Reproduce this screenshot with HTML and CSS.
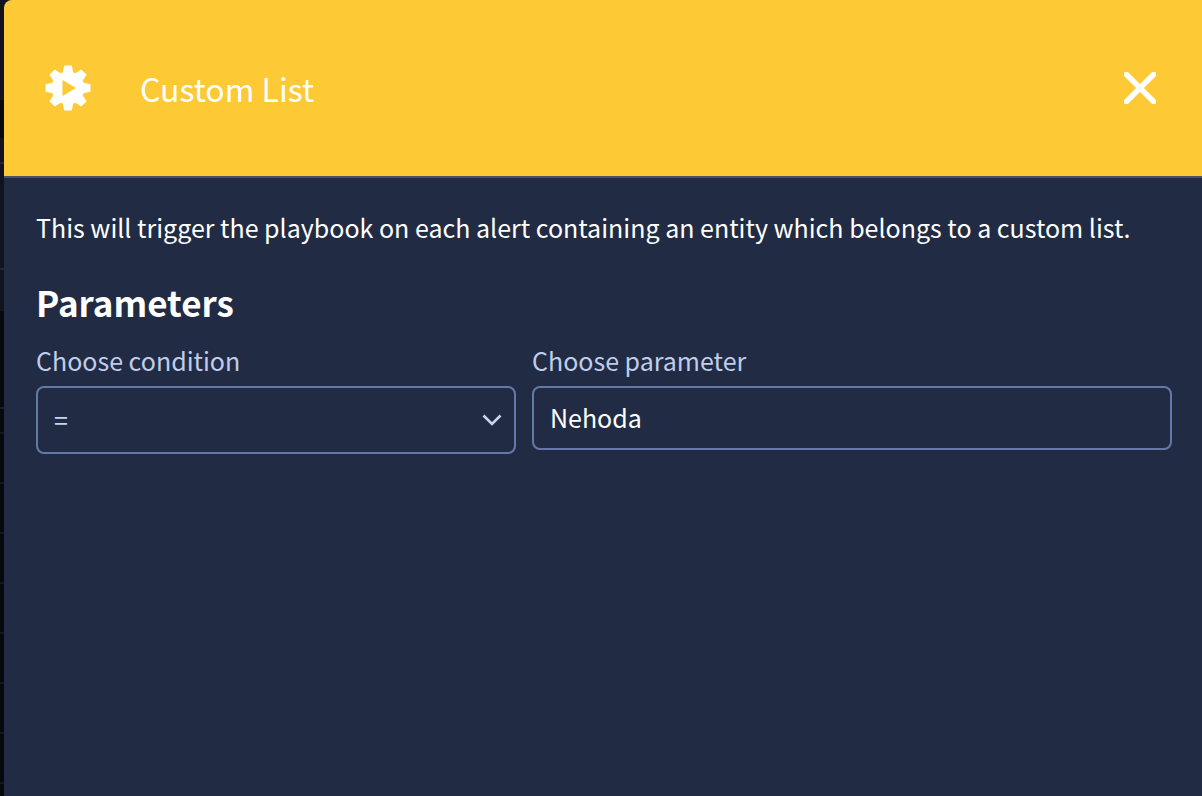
FILE: index.html
```html
<!DOCTYPE html>
<html lang="en">
<head>
    <meta charset="UTF-8">
    <meta name="viewport" content="width=device-width, initial-scale=1.0">
    <title>Custom List</title>
    <link rel="stylesheet" href="styles.css">
</head>
<body>

<div class="panel">
    <header class="panel-header">
        <svg class="gear" viewBox="0 0 46 46" aria-hidden="true">
            <g fill="#fff">
                <circle cx="23" cy="23" r="16.500"/>
                <path id="tooth" d="M17.500 9 L19.200 0.500 H26.800 L28.500 9 Z"/>
                <use href="#tooth" transform="rotate(45 23 23)"/>
                <use href="#tooth" transform="rotate(90 23 23)"/>
                <use href="#tooth" transform="rotate(135 23 23)"/>
                <use href="#tooth" transform="rotate(180 23 23)"/>
                <use href="#tooth" transform="rotate(225 23 23)"/>
                <use href="#tooth" transform="rotate(270 23 23)"/>
                <use href="#tooth" transform="rotate(315 23 23)"/>
            </g>
            <path d="M17.500 15 L31 23 L17.500 31 Z" fill="#fdc935"/>
        </svg>
        <h1 class="panel-title">Custom List</h1>
        <button type="button" class="close" aria-label="Close">
            <svg viewBox="0 0 32 32" aria-hidden="true">
                <path d="M2.500 2.500 L29.500 29.500 M29.500 2.500 L2.500 29.500" stroke="#fff" stroke-width="5.500" stroke-linecap="round"/>
            </svg>
        </button>
    </header>

    <main class="panel-body">
        <p class="description">This will trigger the playbook on each alert containing an entity which belongs to a custom list.</p>

        <h2 class="section-title">Parameters</h2>

        <form class="form-row">
            <div class="form-group condition">
                <label for="condition">Choose condition</label>
                <div class="select-wrap">
                    <select id="condition">
                        <option>=</option>
                    </select>
                    <svg class="chevron" viewBox="0 0 20 12" aria-hidden="true">
                        <path d="M1.500 1.500 L10 10 L18.500 1.500" fill="none" stroke="#c8d5f0" stroke-width="2.600"/>
                    </svg>
                </div>
            </div>
            <div class="form-group parameter">
                <label for="parameter">Choose parameter</label>
                <input type="text" id="parameter" value="Nehoda">
            </div>
        </form>
    </main>
</div>

</body>
</html>
```
FILE: styles.css
```css
* {
    box-sizing: border-box;
}
body {
    margin: 0;
    padding-left: 4px;
    /* dimmed page behind the panel */
    background:
        repeating-linear-gradient(transparent 0 32px, #14151e 32px 34px, transparent 34px 50px) 0 400px / 4px 100% no-repeat,
        linear-gradient(#11131e 0 100px, #08080e 100px 138px, #11131e 138px 162px, #252733 162px 164px, #11131e 164px 268px, #252733 268px 270px, #11131e 270px 311px, #08080f 311px 407px, #1b1c25 407px 409px, #08080f 409px);
    font-family: "Noto Sans CJK SC", "Noto Sans", sans-serif;
    font-size: 25px;
    line-height: 36px;
    color: #fff;
}
.panel {
    min-height: 100vh;
    background-color: #212c44;
    border-top-left-radius: 8px;
    overflow: hidden;
}
.panel-header {
    display: flex;
    align-items: center;
    padding: 62px 46px 62px 41px;
    background-color: #fdc935;
    border-bottom: 2px solid #4b5166;
}
.gear {
    width: 46px;
    height: 46px;
}
.panel-title {
    flex: 1;
    margin: 0 0 0 49px;
    font-size: 32px;
    font-weight: 400;
    line-height: 52px;
}
.close {
    width: 32px;
    height: 32px;
    padding: 0;
    border: none;
    background: none;
    cursor: pointer;
}
.close svg {
    display: block;
}
.panel-body {
    padding: 31px 30px 31px 32px;
}
.description {
    margin: 0;
}
.section-title {
    margin: 31px 0 14px;
    font-size: 35px;
    font-weight: 700;
    line-height: 52px;
}
.form-row {
    display: flex;
    align-items: flex-start;
    gap: 16px;
}
.form-group {
    display: flex;
    flex-direction: column;
    gap: 8px;
}
.condition {
    flex: 3;
}
.parameter {
    flex: 4;
}
label {
    color: #c0cdea;
}
select,
input[type="text"] {
    width: 100%;
    height: 64px;
    padding: 0 16px 2px;
    border: 2px solid #6579a8;
    border-radius: 8px;
    background-color: transparent;
    color: #fff;
    font: inherit;
}
select {
    height: 68px;
    appearance: none;
    color: #c8d5f0;
}
select option {
    background-color: #212c44;
}
.select-wrap {
    position: relative;
}
.chevron {
    position: absolute;
    top: 28px;
    right: 14px;
    width: 20px;
    height: 12px;
    pointer-events: none;
}
```
